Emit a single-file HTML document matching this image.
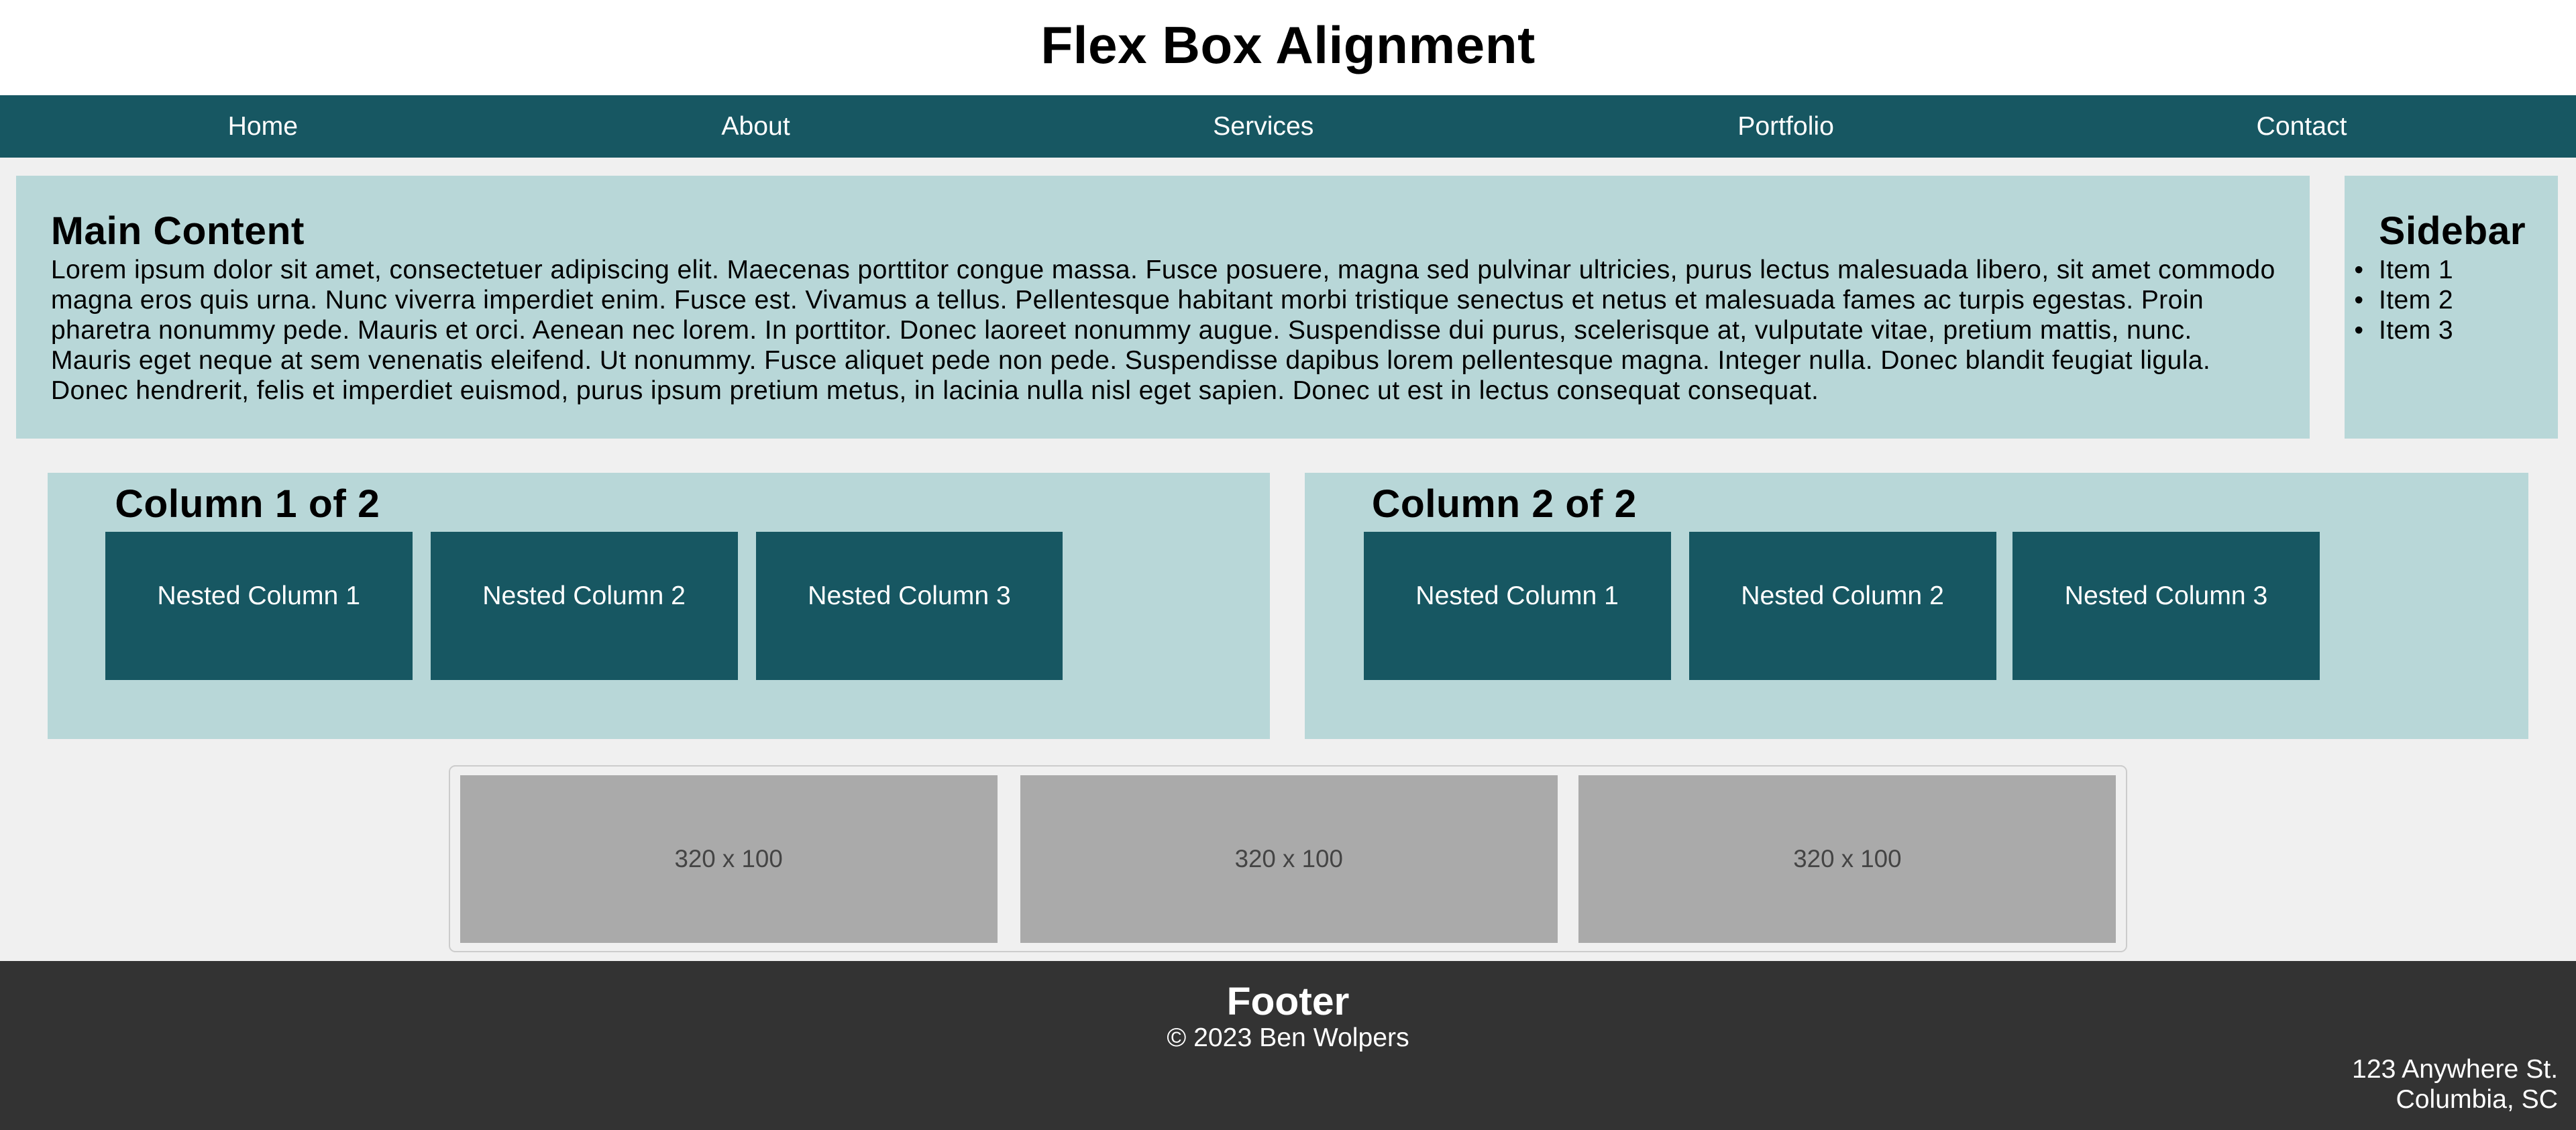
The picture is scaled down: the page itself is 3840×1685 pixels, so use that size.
<!DOCTYPE html>
<html><head><meta charset="utf-8"><style>
html{zoom:2.449;}
body{margin:0;width:1568px;height:688px;position:relative;background:#f0f0f0;font-family:"Liberation Sans",Arial,sans-serif;overflow:hidden;}
.a{position:absolute;}
.hdr{left:0;top:0;width:1568px;height:58px;background:#fff;}
h1{position:absolute;left:0;width:1568px;top:9px;margin:0;text-align:center;font-size:32px;line-height:37px;font-weight:bold;letter-spacing:0.2px;}
.nav{left:0;top:58px;width:1568px;height:38px;background:#175762;}
.nav span{position:absolute;top:10px;color:#fff;font-size:16px;line-height:18px;transform:translateX(-50%);}
.box{background:#b8d7d8;}
h2{margin:0;font-size:24px;line-height:28px;font-weight:bold;position:absolute;letter-spacing:0.2px;}
p{margin:0;font-size:16px;line-height:18.4px;letter-spacing:0.15px;}
.nc{background:#175762;color:#fff;font-size:16px;width:187px;height:90px;text-align:center;line-height:18px;padding-top:0;}
.nc span{position:absolute;top:30px;left:0;width:100%;}
.img{background:#aaa;width:327px;height:102px;color:#444;font-size:15px;text-align:center;line-height:102px;}
.ft{left:0;top:585px;width:1568px;height:103px;background:#333;color:#fff;}
</style></head><body>
<div class="a hdr"><h1>Flex Box Alignment</h1></div>
<div class="a nav">
<span style="left:160px">Home</span><span style="left:460px">About</span><span style="left:769px">Services</span><span style="left:1087px">Portfolio</span><span style="left:1401px">Contact</span>
</div>
<div class="a box" style="left:10px;top:107px;width:1396px;height:160px;">
<h2 style="left:21px;top:20px">Main Content</h2>
<p class="a" style="left:21px;top:48px;width:1356px;">Lorem ipsum dolor sit amet, consectetuer adipiscing elit. Maecenas porttitor congue massa. Fusce posuere, magna sed pulvinar ultricies, purus lectus malesuada libero, sit amet commodo magna eros quis urna. Nunc viverra imperdiet enim. Fusce est. Vivamus a tellus. Pellentesque habitant morbi tristique senectus et netus et malesuada fames ac turpis egestas. Proin pharetra nonummy pede. Mauris et orci. Aenean nec lorem. In porttitor. Donec laoreet nonummy augue. Suspendisse dui purus, scelerisque at, vulputate vitae, pretium mattis, nunc. Mauris eget neque at sem venenatis eleifend. Ut nonummy. Fusce aliquet pede non pede. Suspendisse dapibus lorem pellentesque magna. Integer nulla. Donec blandit feugiat ligula. Donec hendrerit, felis et imperdiet euismod, purus ipsum pretium metus, in lacinia nulla nisl eget sapien. Donec ut est in lectus consequat consequat.</p>
</div>
<div class="a box" style="left:1427px;top:107px;width:130px;height:160px;">
<h2 style="left:21px;top:20px">Sidebar</h2>
<p class="a" style="left:6px;top:48px;">•&nbsp;&nbsp;Item 1<br>•&nbsp;&nbsp;Item 2<br>•&nbsp;&nbsp;Item 3</p>
</div>
<div class="a box" style="left:29px;top:288px;width:744px;height:162px;">
<h2 style="left:41px;top:5px">Column 1 of 2</h2>
<div class="a nc" style="left:35px;top:36px"><span>Nested Column 1</span></div>
<div class="a nc" style="left:233px;top:36px"><span>Nested Column 2</span></div>
<div class="a nc" style="left:431px;top:36px"><span>Nested Column 3</span></div>
</div>
<div class="a box" style="left:794px;top:288px;width:745px;height:162px;">
<h2 style="left:41px;top:5px">Column 2 of 2</h2>
<div class="a nc" style="left:36px;top:36px"><span>Nested Column 1</span></div>
<div class="a nc" style="left:234px;top:36px"><span>Nested Column 2</span></div>
<div class="a nc" style="left:431px;top:36px"><span>Nested Column 3</span></div>
</div>
<div class="a" style="left:273px;top:466px;width:1020px;height:112px;border:1px solid #ccc;border-radius:4px;"></div>
<div class="a img" style="left:280px;top:472px">320 x 100</div>
<div class="a img" style="left:621px;top:472px">320 x 100</div>
<div class="a img" style="left:961px;top:472px">320 x 100</div>
<div class="a ft">
<div class="a" style="left:0;width:1568px;top:11px;text-align:center;font-size:24px;font-weight:bold;line-height:28px;">Footer</div>
<div class="a" style="left:0;width:1568px;top:38px;text-align:center;font-size:16px;line-height:18px;">© 2023 Ben Wolpers</div>
<div class="a" style="right:11px;top:57px;text-align:right;font-size:16px;line-height:18.4px;">123 Anywhere St.<br>Columbia, SC</div>
</div>
</body></html>
